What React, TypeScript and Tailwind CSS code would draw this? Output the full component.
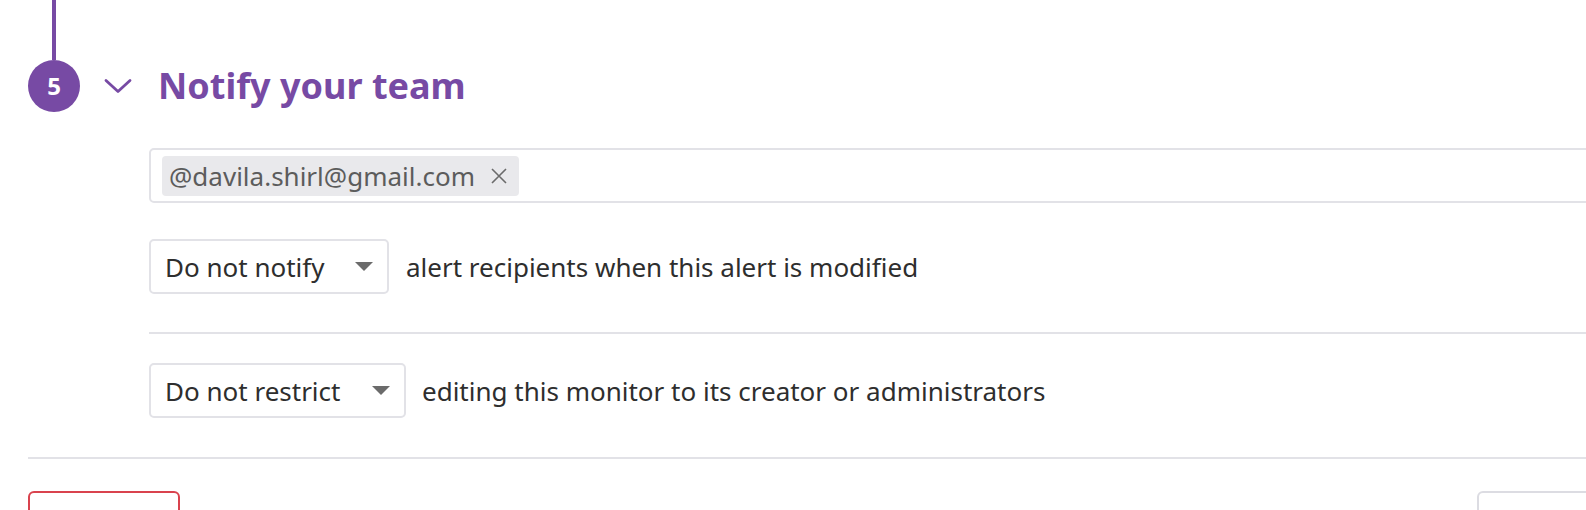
import React from "react";

const PURPLE = "#774aa4";

function Caret() {
  return (
    <svg width="18" height="9" viewBox="0 0 18 9" className="shrink-0">
      <polygon points="0,0 18,0 9,9" fill="#6b6b6b" />
    </svg>
  );
}

function Select({ label, width }: { label: string; width: string }) {
  return (
    <div
      className={`${width} h-[55px] shrink-0 rounded-[5px] border-2 border-[#e2e2e7] bg-white flex items-center justify-between pl-[14px] pr-[14px]`}
    >
      <span className="text-[26px] leading-none text-[#2e2e2e]">{label}</span>
      <Caret />
    </div>
  );
}

export default function App() {
  return (
    <div
      className="w-[1586px] h-[510px] overflow-hidden bg-white"
      style={{ fontFamily: '"Noto Sans", "Open Sans", sans-serif' }}
    >
      <div className="w-[1700px] flex flex-col">
        <div className="ml-[52px] w-[4px] h-[60px] bg-[#774aa4]" />
        <div className="flex items-center ml-[28px] h-[52px]">
          <div className="w-[52px] h-[52px] rounded-full bg-[#774aa4] flex items-center justify-center text-white font-bold text-[24px] leading-none">
            5
          </div>
          <svg width="28" height="16" viewBox="0 0 28 16" className="ml-[24px]">
            <path d="M2 2.5 L14 13.5 L26 2.5" fill="none" stroke={PURPLE} strokeWidth="2.8" strokeLinecap="round" strokeLinejoin="round" />
          </svg>
          <h2 className="ml-[26px] text-[36px] font-bold leading-none text-[#774aa4]">
            Notify your team
          </h2>
        </div>

        <div className="ml-[149px] mt-[36px] flex flex-col">
          <div className="h-[55px] rounded-[5px] border-2 border-[#e2e2e7] flex items-center pl-[11px]">
            <div className="h-[40px] rounded-[4px] bg-[#e9e9ec] flex items-center pl-[7px] pr-[12px] gap-[16px]">
              <span className="text-[26px] leading-none text-[#5c5c5c]">@davila.shirl@gmail.com</span>
              <svg width="16" height="16" viewBox="0 0 16 16">
                <path d="M1 1 L15 15 M15 1 L1 15" stroke="#6b6b6b" strokeWidth="1.6" />
              </svg>
            </div>
          </div>

          <div className="mt-[36px] flex items-center gap-[17px]">
            <Select label="Do not notify" width="w-[240px]" />
            <span className="text-[26px] leading-none text-[#2e2e2e]">
              alert recipients when this alert is modified
            </span>
          </div>

          <div className="mt-[38px] h-[2px] bg-[#e2e2e7]" />

          <div className="mt-[29px] flex items-center gap-[16px]">
            <Select label="Do not restrict" width="w-[257px]" />
            <span className="text-[26px] leading-none text-[#2e2e2e]">
              editing this monitor to its creator or administrators
            </span>
          </div>
        </div>

        <div className="ml-[28px] mt-[39px] h-[2px] bg-[#e2e2e7]" />

        <div className="mt-[32px] flex">
          <div className="ml-[28px] w-[152px] h-[60px] rounded-[6px] border-2 border-[#d9434e] bg-white" />
          <div className="ml-[1297px] w-[200px] h-[60px] rounded-[6px] border-2 border-[#dcdce2] bg-white" />
        </div>
      </div>
    </div>
  );
}
